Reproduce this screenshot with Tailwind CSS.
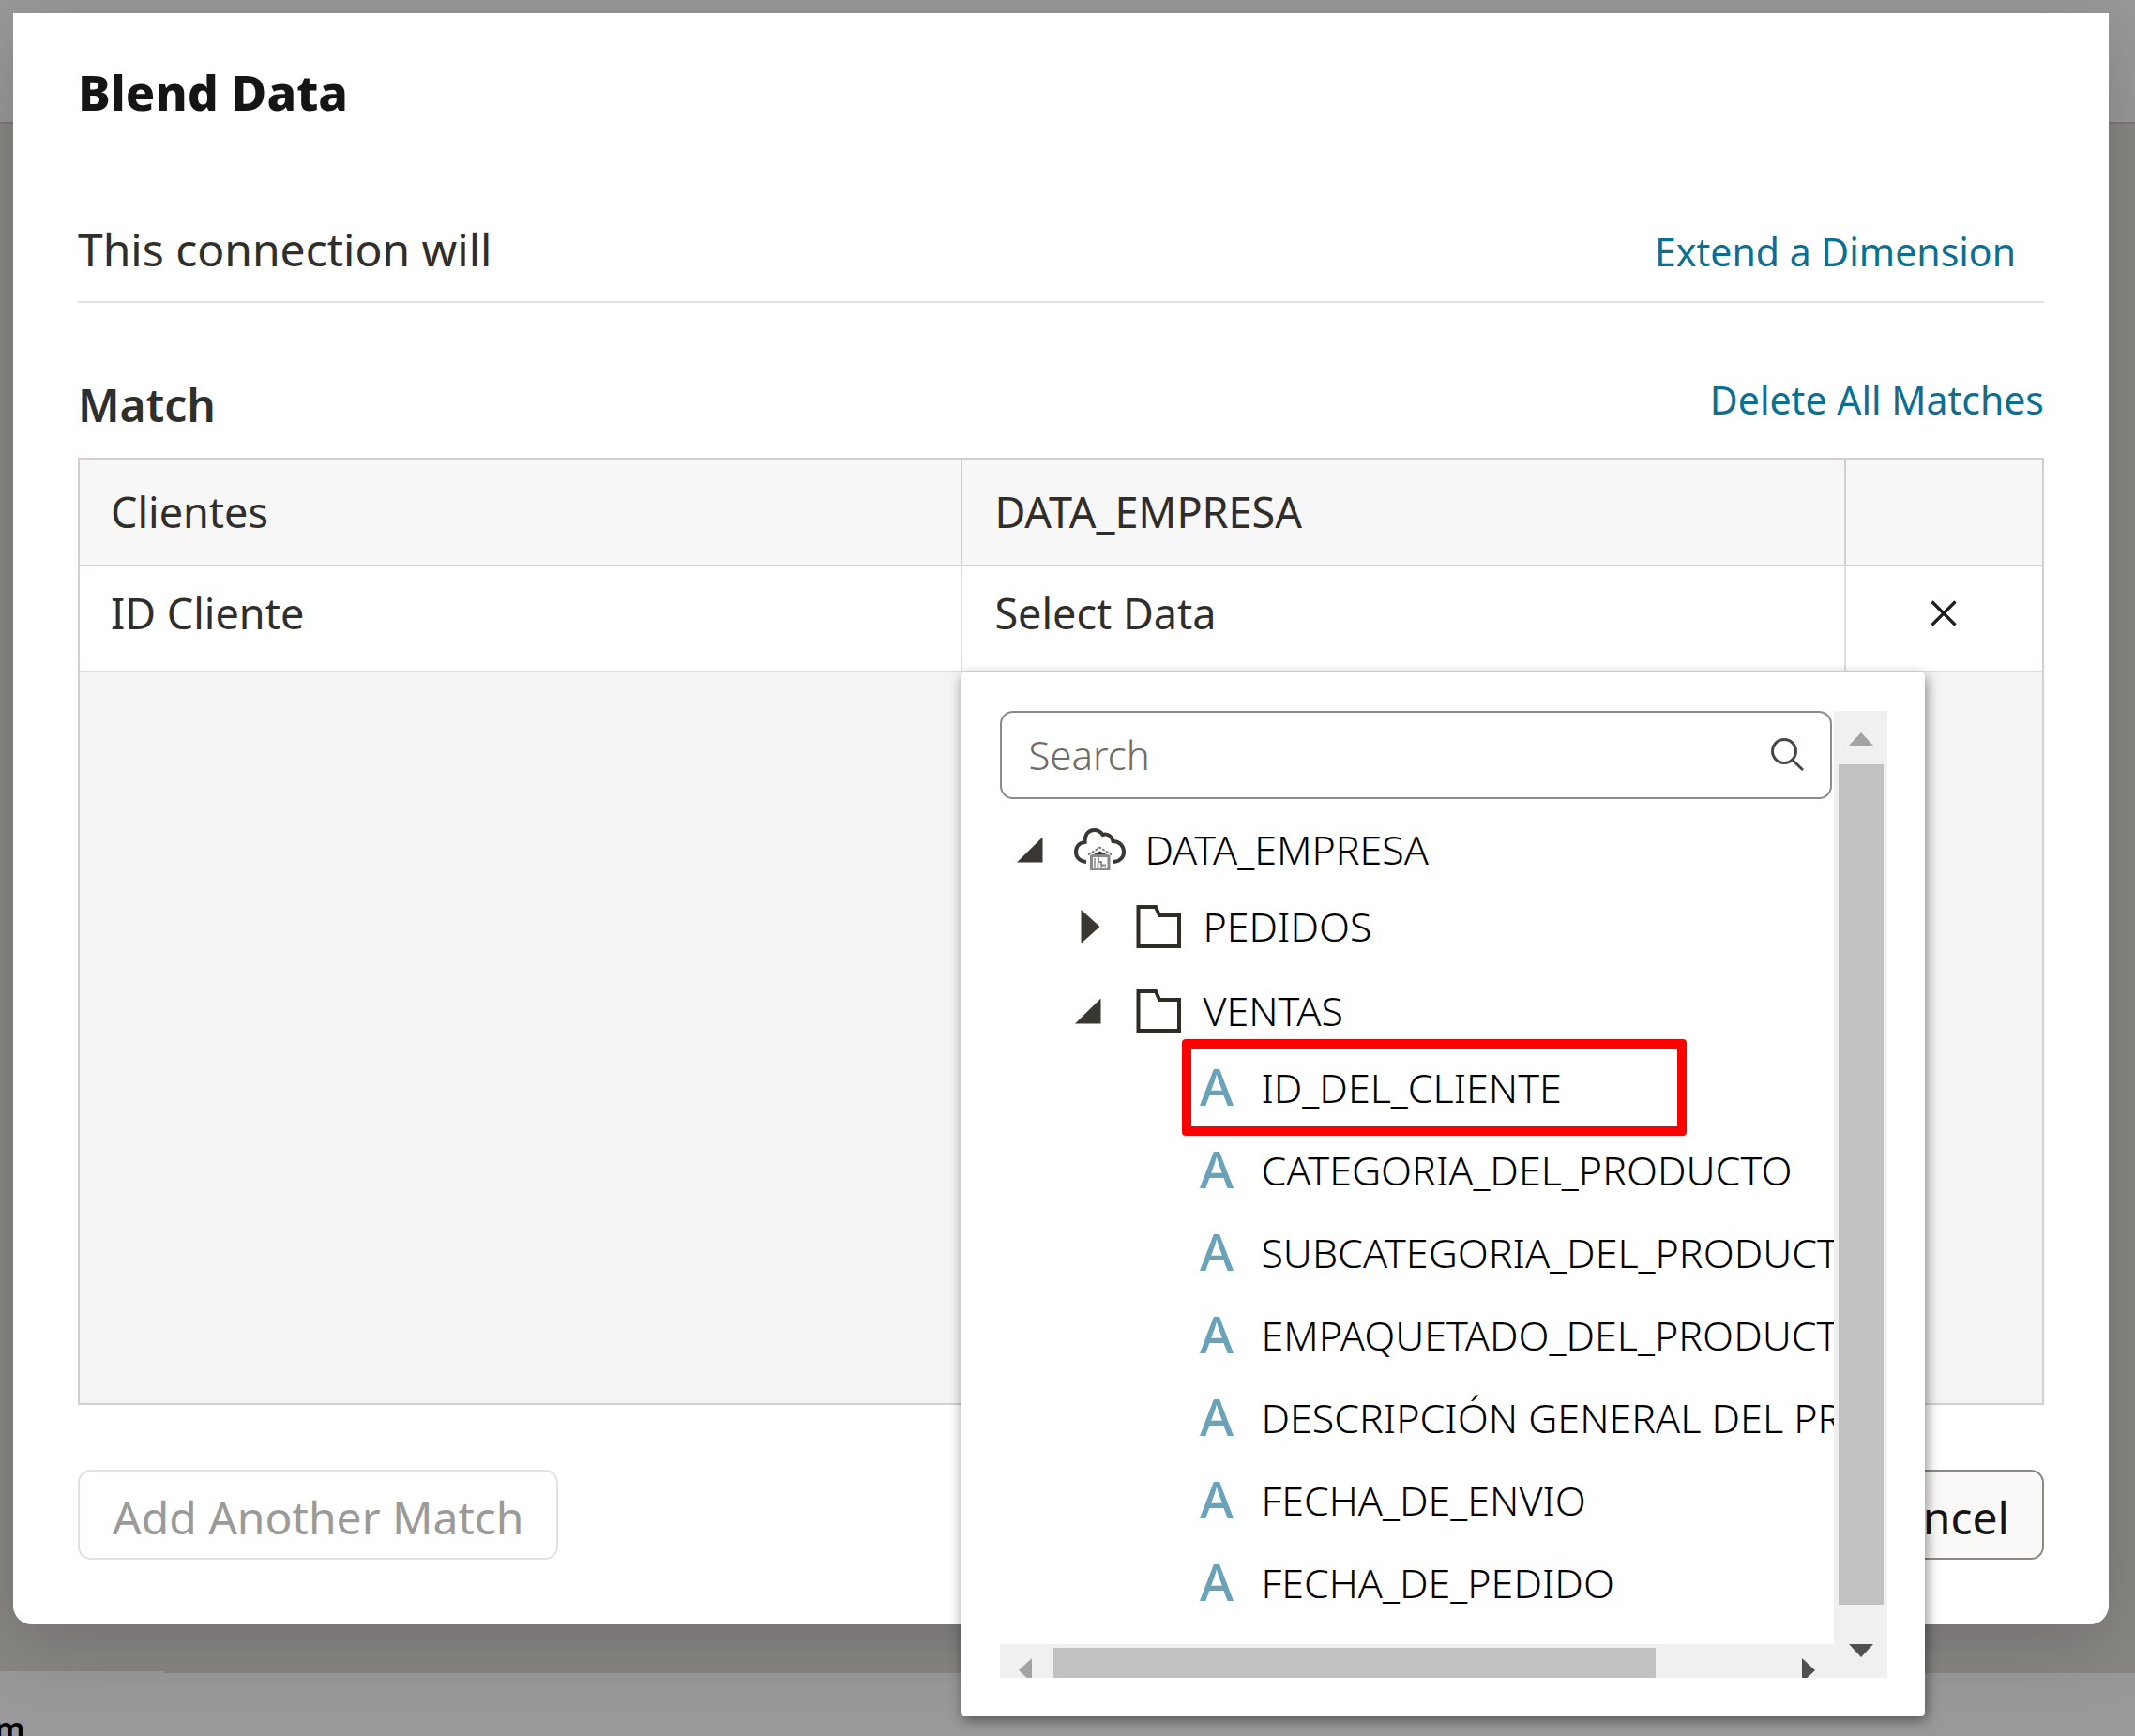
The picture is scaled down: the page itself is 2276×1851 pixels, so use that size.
<!DOCTYPE html>
<html lang="en">
<head>
<meta charset="utf-8">
<meta name="viewport" content="width=device-width, initial-scale=1">
<title>Blend Data</title>
<script src="https://cdn.jsdelivr.net/npm/@tailwindcss/browser@4"></script>
</head>
<body class="relative flex min-h-screen flex-col overflow-x-hidden bg-[#888784] font-['Noto_Sans','Open_Sans',sans-serif] text-[#302e2b]">

<!-- Dimmed page behind the dialog -->
<div class="h-[132px] border-b-2 border-[#7b7976] bg-[#999999]"></div>
<div class="flex-1"></div>
<div class="h-[67px] overflow-hidden bg-[#999999]">
  <div class="-ml-1.5 pt-[35px] text-[34px] leading-[48px] font-semibold text-black">m</div>
</div>
<div class="absolute bottom-[67px] left-0 h-0.5 w-[174px] bg-[#999999]"></div>

<!-- Dialog -->
<div role="dialog" aria-labelledby="title" class="absolute top-[14px] right-[28px] left-[14px] flex flex-col rounded-b-[20px] bg-white px-[69px] pt-[52px] pb-[69px] shadow-[0_20px_80px_rgba(0,0,0,0.18)]">
  <h1 id="title" class="text-[52px] leading-[64px] font-extrabold text-[#161513]">Blend Data</h1>

  <div class="mt-[104px] flex items-baseline justify-between border-b-2 border-[#e4e1dd] pb-[23px]">
    <span class="text-[48px] leading-[64px]">This connection will</span>
    <a href="#" class="mr-[30px] text-[41px] leading-[56px] text-[#0b6f92]">Extend a Dimension</a>
  </div>

  <div class="mt-[75px] flex items-start justify-between">
    <h2 class="pt-0.5 text-[48px] leading-[64px] font-semibold">Match</h2>
    <a href="#" class="text-[41px] leading-[56px] text-[#0b6f92]">Delete All Matches</a>
  </div>

  <div class="mt-6 min-h-[1010px] border-2 border-[#d4cfca] bg-[#f5f4f2]">
    <table class="w-full table-fixed border-separate border-spacing-0 text-left text-[45px] leading-[60px]">
      <colgroup><col class="w-[45%]"><col class="w-[45%]"><col class="w-[10%]"></colgroup>
      <thead>
        <tr class="h-[114px] bg-[#f7f7f7]">
          <th scope="col" class="border-r-2 border-b-2 border-[#d4cfca] px-[33px] font-normal">Clientes</th>
          <th scope="col" class="border-r-2 border-b-2 border-[#d4cfca] px-[34px] font-normal">DATA_EMPRESA</th>
          <td class="border-b-2 border-[#d4cfca]"></td>
        </tr>
      </thead>
      <tbody>
        <tr class="h-[113px] bg-white">
          <td class="border-r-2 border-b-2 border-[#dfdedc] px-[33px] pb-3">ID Cliente</td>
          <td class="relative border-r-2 border-b-2 border-[#dfdedc] px-[34px] pb-3">
            Select Data

            <!-- Column picker -->
            <div class="absolute top-full -left-0.5 z-10 mt-0.5 w-[1028px] rounded-sm bg-white py-[41px] pr-10 pl-[42px] text-[43px] leading-[56px] font-light text-black shadow-[2px_4px_14px_rgba(0,0,0,0.45)]">
              <div class="flex">
                <div class="min-w-0 flex-1">
                  <div class="h-[995px] overflow-hidden">
                    <label class="mr-0.5 flex h-[94px] items-center rounded-[14px] border-2 border-[#8f8984] pr-[28px] pl-[28px]">
                      <span class="sr-only">Search</span>
                      <input type="text" placeholder="Search" class="min-w-0 flex-1 text-[42px] leading-[56px] outline-none placeholder:text-[#6f6c68]">
                      <svg class="size-9" viewBox="0 0 36 36" fill="none" stroke="#4a4642" stroke-width="3"><circle cx="15" cy="14" r="12.5"/><path d="M23.5 23L35 34"/></svg>
                    </label>

                    <ul class="mt-[13px] pl-[18px] whitespace-nowrap">
                      <li>
                        <div class="flex h-[82px] items-center">
                          <svg class="mr-[33px] h-9 w-7" viewBox="0 0 28 36" fill="#3a3631"><path d="M27.500 4.500V31.500H0Z"/></svg>
                          <svg class="mr-5 h-[48px] w-[55px]" viewBox="0 0 55 48" fill="none" stroke="#3a3631" stroke-width="4">
                            <path d="M13 37C6 36.500 2 32 2 26.500C2 20.500 6 16.500 11.500 16C11.500 7.500 15.500 3 21.500 3C25.500 3 28.500 5 30.500 8C35.500 6.500 40.500 9.500 41.500 15C48.500 15 53 20 53 26.500C53 32 48.800 36.500 42 37"/>
                            <path d="M15 29.500L27.500 21.500L40 29.500" stroke="#77746f" stroke-width="1.800" stroke-dasharray="3 1.500"/>
                            <path d="M20 29.500L27.500 25.500L35.500 29.500Z" fill="#3a3631" stroke="none"/>
                            <path d="M18.500 30V44.500H37V30M18.500 30.500H37" stroke="#8c8986" stroke-width="3"/>
                            <path d="M22 45V33M25.500 45V38M29.500 45V40.500M33 45V42.500" stroke="#9c9996" stroke-width="1.800"/>
                            <path d="M26 32V37H29V40.500H34" stroke="#8c8986" stroke-width="1.800"/>
                          </svg>
                          <span>DATA_EMPRESA</span>
                        </div>
                        <ul class="flex flex-col gap-2 pl-[62px]">
                          <li class="flex h-[82px] items-center">
                            <svg class="mr-[33px] h-9 w-7" viewBox="0 0 28 36" fill="#3a3631"><path d="M6.500 0L26.500 18L6.500 36Z"/></svg>
                            <svg class="mr-5 h-[48px] w-[55px]" viewBox="0 0 55 48" fill="none" stroke="#302b25" stroke-width="4"><path d="M6.500 3H25L29 12H50V45H6.500Z"/></svg>
                            <span>PEDIDOS</span>
                          </li>
                          <li>
                            <div class="flex h-[82px] items-center">
                              <svg class="mr-[33px] h-9 w-7" viewBox="0 0 28 36" fill="#3a3631"><path d="M27.500 4.500V31.500H0Z"/></svg>
                              <svg class="mr-5 h-[48px] w-[55px]" viewBox="0 0 55 48" fill="none" stroke="#302b25" stroke-width="4"><path d="M6.500 3H25L29 12H50V45H6.500Z"/></svg>
                              <span>VENTAS</span>
                            </div>
                            <ul class="flex flex-col gap-1.5 pl-[123px]">
                              <li class="relative flex h-[82px] items-center">
                                <span aria-hidden="true" class="mr-5 w-[55px] shrink-0 pb-1 text-center text-[55px] font-medium text-[#6aa3b9]">A</span><span>ID_DEL_CLIENTE</span>
                                <span class="absolute -top-[11px] -left-[9px] h-[103px] w-[538px] rounded-sm border-[10px] border-[#ff0000]"></span>
                              </li>
                              <li class="flex h-[82px] items-center"><span aria-hidden="true" class="mr-5 w-[55px] shrink-0 pb-1 text-center text-[55px] font-medium text-[#6aa3b9]">A</span><span>CATEGORIA_DEL_PRODUCTO</span></li>
                              <li class="flex h-[82px] items-center"><span aria-hidden="true" class="mr-5 w-[55px] shrink-0 pb-1 text-center text-[55px] font-medium text-[#6aa3b9]">A</span><span>SUBCATEGORIA_DEL_PRODUCTO</span></li>
                              <li class="flex h-[82px] items-center"><span aria-hidden="true" class="mr-5 w-[55px] shrink-0 pb-1 text-center text-[55px] font-medium text-[#6aa3b9]">A</span><span>EMPAQUETADO_DEL_PRODUCTO</span></li>
                              <li class="flex h-[82px] items-center"><span aria-hidden="true" class="mr-5 w-[55px] shrink-0 pb-1 text-center text-[55px] font-medium text-[#6aa3b9]">A</span><span>DESCRIPCIÓN GENERAL DEL PRODUCTO</span></li>
                              <li class="flex h-[82px] items-center"><span aria-hidden="true" class="mr-5 w-[55px] shrink-0 pb-1 text-center text-[55px] font-medium text-[#6aa3b9]">A</span><span>FECHA_DE_ENVIO</span></li>
                              <li class="flex h-[82px] items-center"><span aria-hidden="true" class="mr-5 w-[55px] shrink-0 pb-1 text-center text-[55px] font-medium text-[#6aa3b9]">A</span><span>FECHA_DE_PEDIDO</span></li>
                            </ul>
                          </li>
                        </ul>
                      </li>
                    </ul>
                  </div>
                  <!-- Horizontal scrollbar -->
                  <div class="flex h-9 items-start bg-[#f0f0f0] pt-1">
                    <svg class="mr-[23px] ml-5 h-8 w-[14px]" viewBox="0 0 14 32" fill="#a3a3a3"><path d="M14 11V37L0 24Z"/></svg>
                    <div class="h-8 w-[642px] bg-[#c1c1c1]"></div>
                    <svg class="mr-5 ml-auto h-8 w-[14px]" viewBox="0 0 14 32" fill="#505050"><path d="M0 11V37L14 24Z"/></svg>
                  </div>
                </div>
                <!-- Vertical scrollbar -->
                <div class="flex w-[57px] flex-col items-center bg-[#f0f0f0] pt-[23px]">
                  <svg class="h-[14px] w-[26px]" viewBox="0 0 26 14" fill="#a3a3a3"><path d="M0 14H26L13 0Z"/></svg>
                  <div class="mt-5 h-[896px] w-[48px] bg-[#c1c1c1]"></div>
                  <svg class="mt-[42px] h-[14px] w-[26px]" viewBox="0 0 26 14" fill="#505050"><path d="M0 0H26L13 14Z"/></svg>
                </div>
              </div>
            </div>
          </td>
          <td class="border-b-2 border-[#dfdedc] pb-3">
            <button type="button" aria-label="Delete match" class="mx-auto block">
              <svg class="size-7" viewBox="0 0 28 28" stroke="#201e1c" stroke-width="3.200"><path d="M1.500 1.500L26.500 26.500M26.500 1.500L1.500 26.500"/></svg>
            </button>
          </td>
        </tr>
      </tbody>
    </table>
  </div>

  <div class="mt-[69px] flex justify-between text-[48px] leading-[64px]">
    <button type="button" disabled class="h-24 rounded-[14px] border-2 border-[#e4e1dd] px-[35px] pt-1.5 text-[#9b9a99]">Add Another Match</button>
    <button type="button" class="h-24 rounded-[14px] border-2 border-[#8f8984] bg-[#fbf9f8] px-[35px] pt-1.5 text-[#161513]">Cancel</button>
  </div>
</div>
</body>
</html>
